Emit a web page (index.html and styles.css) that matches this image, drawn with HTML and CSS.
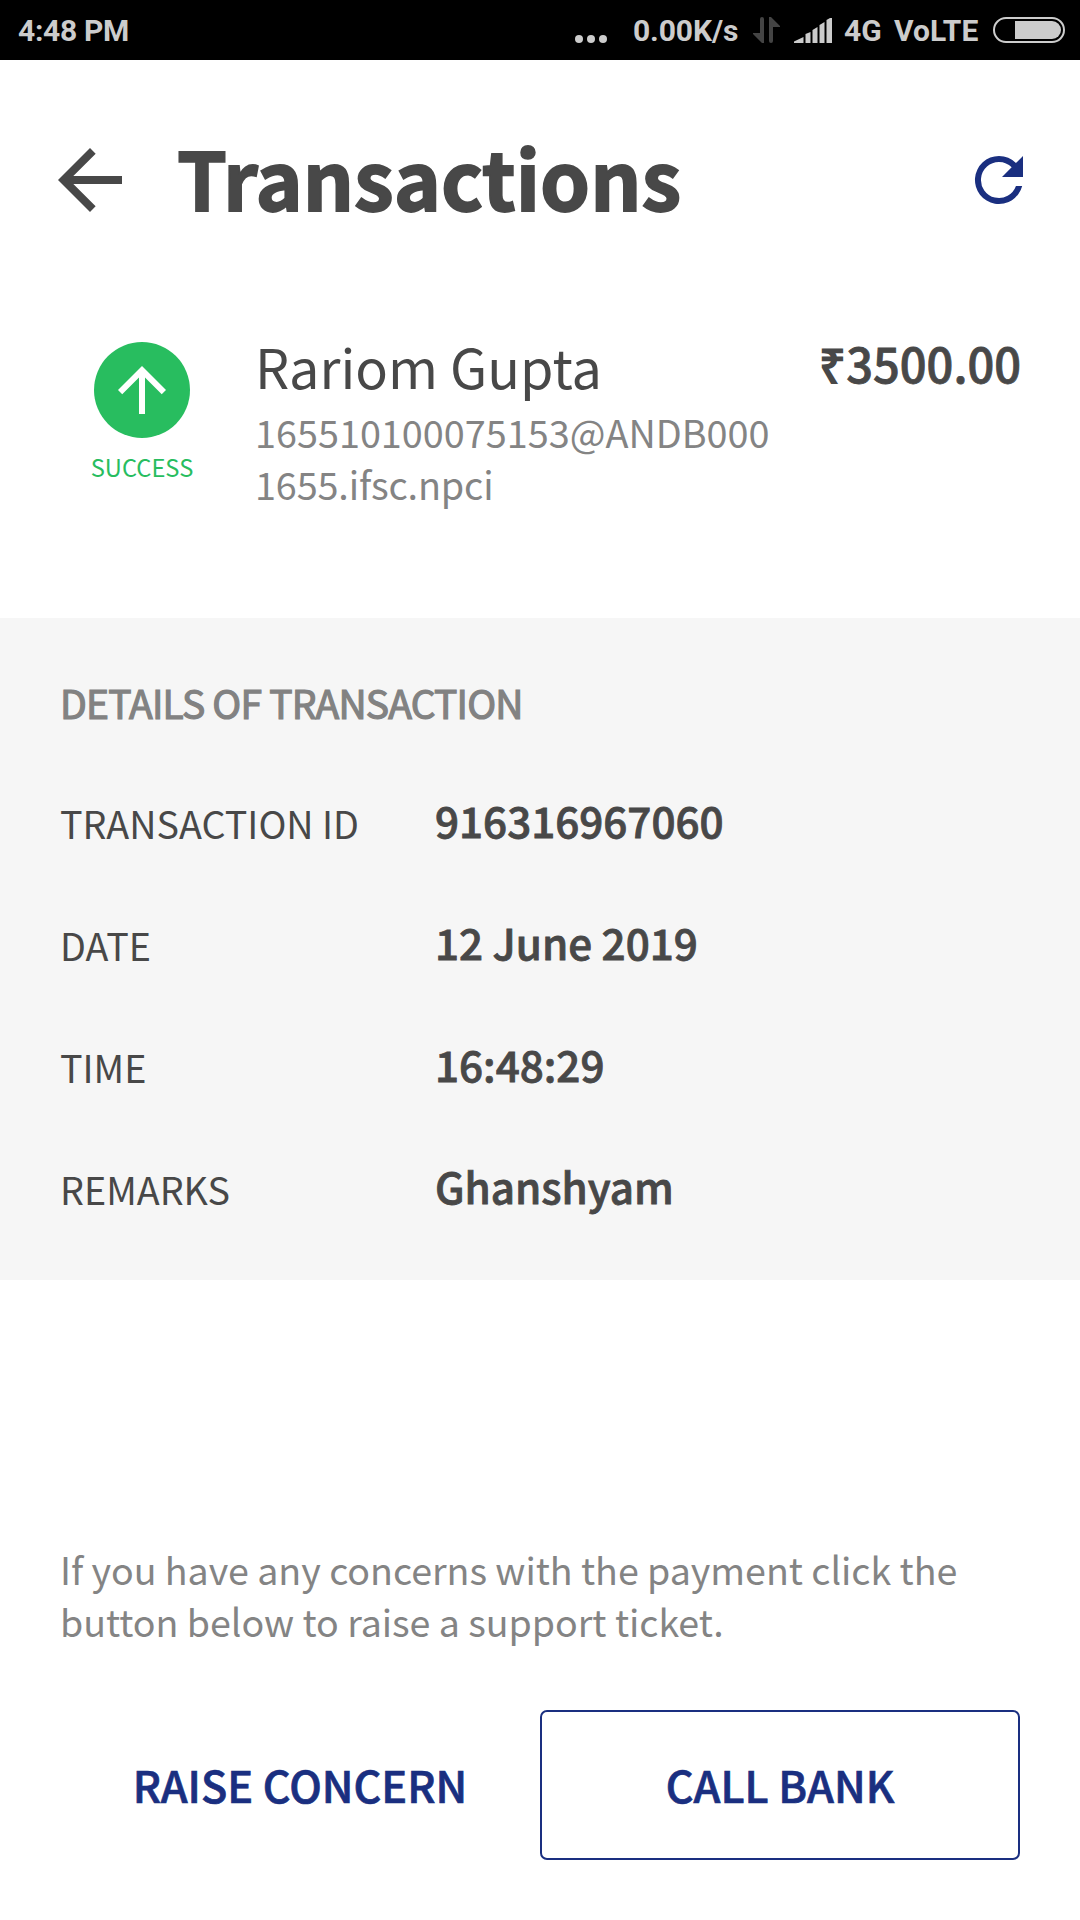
FILE: index.html
```html
<!DOCTYPE html>
<html lang="en">
<head>
<meta charset="utf-8">
<title>Transactions</title>
<link rel="stylesheet" href="styles.css">
</head>
<body>
<div class="status">
  <span class="clock">4:48 PM</span>
  <svg class="dots" width="32" height="8" viewBox="0 0 32 8"><circle cx="4" cy="4" r="4"/><circle cx="16" cy="4" r="4"/><circle cx="28" cy="4" r="4"/></svg>
  <span class="speed">0.00K/s</span>
  <svg class="updown" width="27" height="26" viewBox="0 0 27 26"><path d="M7 2Q7 0 9 0T11 2V26H9L0 17V16H7zM16 0H18L27 9V10H20V24Q20 26 18 26T16 24z"/></svg>
  <svg class="signal" width="38" height="26" viewBox="0 0 38 26"><path d="M0 26V24.500L9.500 20V26zM11.500 26V17L16.500 15V26zM18.500 26V13L23.500 10V26zM25.500 26V8L30.500 5V26zM32.500 26V3L36 1H38V26z"/></svg>
  <span class="net">4G VoLTE</span>
  <span class="battery"><span class="charge"></span></span>
</div>
<header class="header">
  <svg class="back" width="64" height="64" viewBox="4 4 16 16"><path d="M20 11H7.830l5.590-5.590L12 4l-8 8 8 8 1.410-1.410L7.830 13H20z"/></svg>
  <h1>Transactions</h1>
  <svg class="refresh" width="72" height="72" viewBox="0 0 24 24"><path d="M17.650 6.350A7.960 7.960 0 0 0 12 4a8 8 0 1 0 7.730 10h-2.080A6 6 0 1 1 12 6c1.660 0 3.140.69 4.220 1.780L13 11h7V4z"/></svg>
</header>
<section class="summary">
  <div class="state">
    <svg width="96" height="96" viewBox="0 0 32 32"><circle cx="16" cy="16" r="16"/><path d="M8 16l1.410 1.410L15 11.830V24h2V11.830l5.580 5.590L24 16l-8-8z"/></svg>
    <span>SUCCESS</span>
  </div>
  <div class="payee"><div class="name">Rariom Gupta</div><div class="vpa">165510100075153@ANDB000<br><span class="domain">1655.ifsc.npci</span></div></div>
  <div class="amount"><span class="rupee">₹</span>3500.00</div>
</section>
<section class="details">
  <h2>DETAILS OF TRANSACTION</h2>
  <dl>
    <dt>TRANSACTION ID</dt><dd>916316967060</dd>
    <dt>DATE</dt><dd>12 June 2019</dd>
    <dt>TIME</dt><dd>16:48:29</dd>
    <dt>REMARKS</dt><dd>Ghanshyam</dd>
  </dl>
</section>
<footer class="footer">
  <p>If you have any concerns with the payment click the<br>button below to raise a support ticket.</p>
  <div class="actions"><button>RAISE CONCERN</button><button class="outlined">CALL BANK</button></div>
</footer>
</body>
</html>
```
FILE: styles.css
```css
* { box-sizing: border-box; margin: 0; padding: 0; }
body { width: 1080px; height: 1920px; background: #fff; color: #484848; font-family: "Noto Sans CJK SC", "Noto Sans CJK JP", sans-serif; display: flex; flex-direction: column; overflow: hidden; white-space: nowrap; }
.status { height: 60px; background: #000; color: #ccc; display: flex; align-items: center; padding: 0 15px 0 18px; font: 700 30px/60px Roboto, sans-serif; }
.clock, .speed, .net { padding-top: 1px; }
.clock { margin-right: auto; letter-spacing: -0.3px; }
.status svg { fill: #ccc; flex: none; }
.dots { margin: 18px 26px 0 0; }
.speed { width: 106px; letter-spacing: -0.1px; }
.status .updown { fill: #444; margin: 0 14px; }
.signal { margin-right: 12px; }
.net { width: 134px; word-spacing: 5px; }
.battery { width: 72px; height: 26px; margin-left: 15px; border: 2px solid #ccc; border-radius: 13px; padding: 2px; display: flex; justify-content: flex-end; }
.charge { width: 46px; background: #ccc; border-radius: 0 9px 9px 0; }
.header { height: 240px; display: flex; align-items: center; padding: 0 45px 0 58px; }
.back { fill: #484848; flex: none; }
h1 { font-size: 80px; font-weight: 700; line-height: 120px; margin: 0 0 8px 55px; -webkit-text-stroke: 1.8px; }
.refresh { fill: #1a2f80; margin-left: auto; }
.summary { height: 318px; display: flex; padding: 42px 59px 0 82px; }
.state { width: 120px; display: flex; flex-direction: column; align-items: center; color: #28bd5f; font-size: 23.7px; line-height: 36px; }
.state svg { fill: #28bd5f; }
.state path { fill: #fff; }
.state span { margin-top: 11px; }
.payee { margin-left: 53px; }
.name { font-size: 54px; line-height: 48px; }
.vpa { font-size: 37.8px; line-height: 52px; color: #848484; margin-top: 16px; }
.domain { letter-spacing: -0.15px; }
.amount { margin-left: auto; font-size: 47px; line-height: 41px; font-weight: 500; -webkit-text-stroke: 0.8px; }
.rupee { -webkit-text-stroke: 1.8px; }
.details { height: 662px; background: #f6f6f6; padding: 57px 60px 0; }
h2 { font-size: 39px; line-height: 54px; font-weight: 400; color: #828282; letter-spacing: -0.8px; -webkit-text-stroke: 1.2px; }
dl { display: grid; grid-template-columns: 375px 1fr; grid-auto-rows: 122px; align-items: start; margin-top: 30px; line-height: 122px; }
dt { font-size: 37.7px; line-height: 128px; }
dd { font-size: 42.2px; font-weight: 500; -webkit-text-stroke: 0.8px; }
.footer { padding: 263px 60px 0; }
.footer p { font-size: 37.6px; line-height: 52px; color: #848484; letter-spacing: -0.04px; }
.actions { display: grid; grid-template-columns: 480px 480px; height: 150px; margin-top: 63px; }
button { background: none; border: 0; padding-bottom: 2px; font: 500 43.2px "Noto Sans CJK SC", sans-serif; color: #1a2f80; -webkit-text-stroke: 0.7px; }
.outlined { border: 2px solid #1a2f80; border-radius: 7px; }
```
